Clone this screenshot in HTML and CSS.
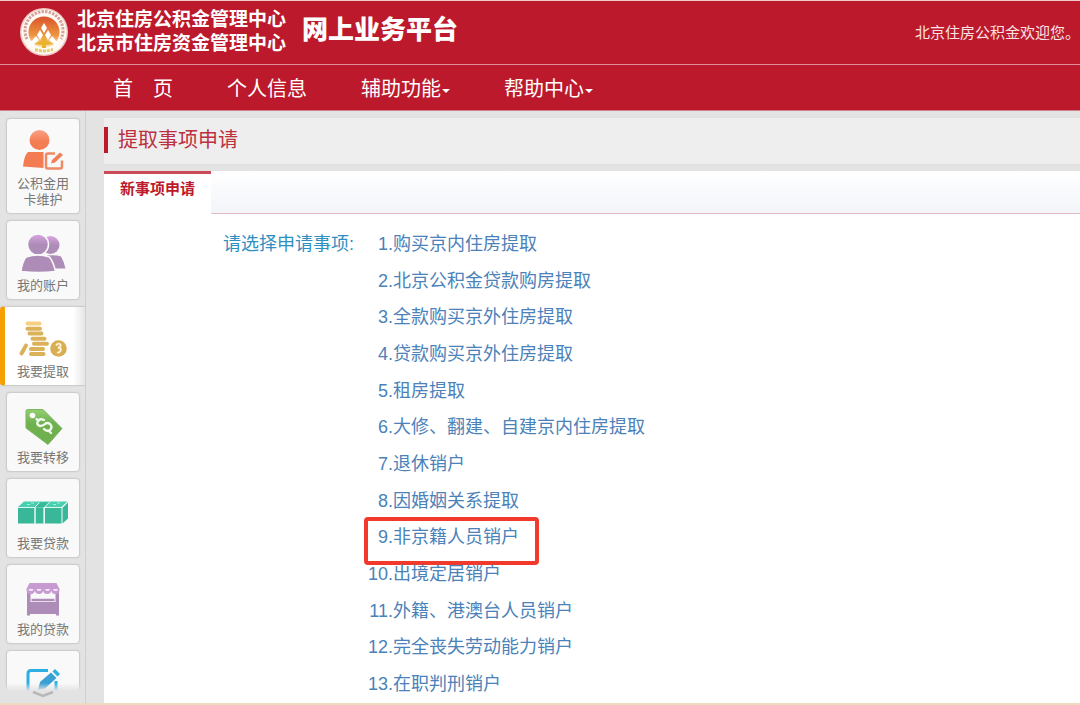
FILE: index.html
```html
<!DOCTYPE html>
<html lang="zh-CN">
<head>
    <meta charset="UTF-8">
    <meta name="viewport" content="width=device-width, initial-scale=1.0">
    <title>网上业务平台</title>
    <link rel="stylesheet" href="styles.css">
</head>
<body>
    <header class="header">
        <div class="banner">
            <svg class="logo" viewBox="0 0 48 48" aria-hidden="true">
                <defs>
                    <linearGradient id="sun" x1="0" y1="0" x2="0" y2="1">
                        <stop offset="0" stop-color="#d9542b"/>
                        <stop offset="0.6" stop-color="#ee9440"/>
                        <stop offset="1" stop-color="#fbe9c0"/>
                    </linearGradient>
                </defs>
                <circle cx="24" cy="24" r="24" fill="#f0c9c2"/>
                <circle cx="24" cy="24" r="22.5" fill="#fffaf3"/>
                <path d="M7 31a19 19 0 1 1 34 0" fill="none" stroke="#d3a09c" stroke-width="3" stroke-dasharray="2.4 1.2"/>
                <circle cx="24" cy="24" r="15.5" fill="url(#sun)"/>
                <path d="M9 31a16 16 0 0 0 30 0l3 5a22 22 0 0 1-36 0z" fill="#fffaf3"/>
                <path d="M24 15l3 5-3 5-3-5zM20 22l3 5-3 5-3-5zM28 22l3 5-3 5-3-5zM16 28l3 4-6 5-4-1zM32 28l-3 4 6 5 4-1z" fill="#fff"/>
                <path d="M24 28l3 5 7 3-8 1v3h-4v-3l-8-1 7-3z" fill="#e9b32e"/>
                <path d="M15 41.500q9 3 18 0" fill="none" stroke="#e3cb6a" stroke-width="3" stroke-dasharray="3 1"/>
            </svg>
            <div class="org">
                <div>北京住房公积金管理中心</div>
                <div>北京市住房资金管理中心</div>
            </div>
            <h1 class="platform">网上业务平台</h1>
            <div class="welcome">北京住房公积金欢迎您。</div>
        </div>
        <nav class="nav">
            <a href="#">首&emsp;页</a>
            <a href="#">个人信息</a>
            <a href="#" class="dropdown">辅助功能</a>
            <a href="#" class="dropdown">帮助中心</a>
        </nav>
    </header>

    <div class="page">
        <aside class="sidebar">
            <a href="#" class="card">
                <svg class="icon" viewBox="0 0 52 48" aria-hidden="true">
                    <defs>
                        <linearGradient id="orange" x1="0" y1="0" x2="0" y2="1">
                            <stop offset="0" stop-color="#fba184"/>
                            <stop offset="0.6" stop-color="#f47c52"/>
                        </linearGradient>
                    </defs>
                    <circle cx="22.500" cy="13" r="10" fill="url(#orange)"/>
                    <path d="M11 25h15.500v16L6 39.500q1-11 5-14.500z" fill="#f47c52"/>
                    <path d="M38 26.500h-7q-2 0-2 2v11q0 2 2 2h12q2 0 2-2v-6" fill="none" stroke="#ee8a66" stroke-width="2.500"/>
                    <path d="M34 36.500l1-3.500 8-7.500 3 2.500-8 7.500z" fill="#f08058"/>
                </svg>
                <span>公积金用<br>卡维护</span>
            </a>
            <a href="#" class="card">
                <svg class="icon" viewBox="0 0 52 48" aria-hidden="true">
                    <defs>
                        <linearGradient id="violet" x1="0" y1="0" x2="0" y2="1">
                            <stop offset="0" stop-color="#d9a6e2"/>
                            <stop offset="0.5" stop-color="#ae8cb8"/>
                        </linearGradient>
                    </defs>
                    <circle cx="33.500" cy="16" r="9" fill="url(#violet)"/>
                    <path d="M30 26.500q9-1 14 1 3 5 4.500 12H36z" fill="#ae8cb8"/>
                    <circle cx="21" cy="15.500" r="10.500" fill="url(#violet)" stroke="#fafafa" stroke-width="1.500"/>
                    <path d="M9 28q12-4 23.500 0 4 5 6 14.500-17 2-34.500 0Q5 33 9 28z" fill="#ae8cb8" stroke="#fafafa" stroke-width="1.500"/>
                </svg>
                <span>我的账户</span>
            </a>
            <a href="#" class="card active">
                <svg class="icon" viewBox="0 0 52 48" aria-hidden="true">
                    <g fill="none" stroke="#dbb25a" stroke-width="4" stroke-linecap="round">
                        <path d="M10.500 8.500h12" stroke="#f6cf80"/>
                        <path d="M10.500 13.700h12.500M12.500 18.600h12M15.500 23.700h12M17 28.800h13M14 34h12M14 39h12.500M4.500 38.500l4.500-8"/>
                    </g>
                    <circle cx="41.500" cy="33.500" r="8.300" fill="#d9ae52"/>
                    <path d="M39 30.500q2-3 4.500-1 1 2-2.500 4M41 32q4 1 2.500 4-2 2-3.500 1.500" fill="none" stroke="#fff2d6" stroke-width="1.800"/>
                </svg>
                <span>我要提取</span>
            </a>
            <a href="#" class="card">
                <svg class="icon" viewBox="0 0 52 48" aria-hidden="true">
                    <defs>
                        <linearGradient id="green" x1="0" y1="0" x2="0" y2="1">
                            <stop offset="0" stop-color="#93d071"/>
                            <stop offset="0.4" stop-color="#6fb04f"/>
                        </linearGradient>
                    </defs>
                    <path d="M10.500 8.500H26L45 27.500 31 43.500 9 27V10q0-1.500 1.500-1.500z" fill="url(#green)" stroke="#7bb35e" stroke-linejoin="round"/>
                    <circle cx="15.500" cy="14.500" r="2.800" fill="#fff"/>
                    <path d="M27 19q-4-2-6 1-2 4 2 5 3 0 5-2t5 0q3 3 0 6-3 2-6-1M19.500 18l2 2M32 30l2 2" fill="none" stroke="#f3faee" stroke-width="2.400" stroke-linecap="round"/>
                </svg>
                <span>我要转移</span>
            </a>
            <a href="#" class="card">
                <svg class="icon" viewBox="0 0 52 48" aria-hidden="true">
                    <path d="M1 20l6-5.500h43.500l-6 5.500z" fill="#48cfb0"/>
                    <path d="M1 20.500h16.500v16H1zM18.500 20.500h8v16h-8zM28 20.500h16.500v16H28z" fill="#38b898"/>
                    <path d="M18.500 20.500l5-5h8l-5 5zM45.500 20.500l5.500-5v16l-5.500 5z" fill="#38b898"/>
                    <path d="M1 20.500h16.500l5-5M18 21v15.500M27.300 36.500v-16l6-6M28 20.500h17l5.500-5" fill="none" stroke="#dff7f0"/>
                    <path d="M10 17.500h3M14 16h3M36 17.500h3M40 16h3" stroke="#a8ecdc" stroke-width="1.200"/>
                </svg>
                <span>我要贷款</span>
            </a>
            <a href="#" class="card">
                <svg class="icon" viewBox="0 0 52 48" aria-hidden="true">
                    <path d="M10 19h3.500v10h25V19H42v23.500h-3V41H13v1.500h-3z" fill="#ae8cb8"/>
                    <path d="M14.500 27h23" stroke="#ae8cb8" stroke-width="2.500"/>
                    <path d="M12.500 10h27l3 6v1a4.100 4.100 0 0 1-8.200 0 4.100 4.100 0 0 1-8.200 0 4.100 4.100 0 0 1-8.200 0 4.100 4.100 0 0 1-8.400 0v-1z" fill="#c79bd2"/>
                    <path d="M11.500 16a2.500 2 0 0 0 5 0M19.500 16a2.500 2 0 0 0 5 0M28 16a2.500 2 0 0 0 5 0M36 16a2.500 2 0 0 0 5 0" fill="#f4e9f6"/>
                </svg>
                <span>我的贷款</span>
            </a>
            <a href="#" class="card" aria-label="申请">
                <svg class="icon" viewBox="0 0 52 48" aria-hidden="true">
                    <path d="M31 11.500H14q-3 0-3 3V40h28V22" fill="none" stroke="#2cb0e4" stroke-width="3"/>
                    <path d="M21 31l2-8L34 13.500l5.500 5.500L28 29.500z" fill="#3aa0d4"/>
                    <path d="M35.500 12.500l2.500-2.500 5 5-2.500 2.500z" fill="#2cb0e4"/>
                </svg>
            </a>
            <button class="more" type="button" aria-label="更多">
                <svg viewBox="0 0 22 8" aria-hidden="true"><path d="M1 2l10 4 10-4" fill="none" stroke="#b8b8b8" stroke-width="2.500"/></svg>
            </button>
        </aside>

        <main class="main">
            <div class="title-bar">
                <h2>提取事项申请</h2>
            </div>
            <div class="tabs">
                <a href="#" class="tab">新事项申请</a>
            </div>
            <section class="content">
                <div class="label">请选择申请事项:</div>
                <ul class="items">
                    <li><a href="#"><span class="num">1.</span>购买京内住房提取</a></li>
                    <li><a href="#"><span class="num">2.</span>北京公积金贷款购房提取</a></li>
                    <li><a href="#"><span class="num">3.</span>全款购买京外住房提取</a></li>
                    <li><a href="#"><span class="num">4.</span>贷款购买京外住房提取</a></li>
                    <li><a href="#"><span class="num">5.</span>租房提取</a></li>
                    <li><a href="#"><span class="num">6.</span>大修、翻建、自建京内住房提取</a></li>
                    <li><a href="#"><span class="num">7.</span>退休销户</a></li>
                    <li><a href="#"><span class="num">8.</span>因婚姻关系提取</a></li>
                    <li><a href="#" class="marked"><span class="num">9.</span>非京籍人员销户</a></li>
                    <li><a href="#"><span class="num">10.</span>出境定居销户</a></li>
                    <li><a href="#"><span class="num">11.</span>外籍、港澳台人员销户</a></li>
                    <li><a href="#"><span class="num">12.</span>完全丧失劳动能力销户</a></li>
                    <li><a href="#"><span class="num">13.</span>在职判刑销户</a></li>
                </ul>
            </section>
        </main>
    </div>
</body>
</html>
```

FILE: styles.css
```css
* {
    box-sizing: border-box;
}
body {
    display: flex;
    flex-direction: column;
    height: 100vh;
    margin: 0;
    font-family: "Liberation Sans", "Noto Sans CJK SC", sans-serif;
    background-color: #e3e3e3;
    border-bottom: 2px solid #ecdcc0;
}
a {
    text-decoration: none;
}

/* 顶部 */
.header {
    background-color: #bc1a2c;
    border-top: 1px solid #f0cccc;
    border-bottom: 1px solid #d0808a;
    color: #fff;
}
.banner {
    display: flex;
    align-items: center;
    height: 64px;
    padding: 0 0 2px 20px;
    border-bottom: 1px solid #dd8f98;
}
.logo {
    width: 48px;
    height: 48px;
    margin-right: 9px;
}
.org {
    font-size: 19px;
    font-weight: bold;
    line-height: 24px;
    margin-right: 16px;
}
.platform {
    margin: 0;
    font-size: 26px;
    font-weight: 900;
    line-height: 24px;
    padding-bottom: 4px;
}
.welcome {
    margin-left: auto;
    font-size: 15px;
    color: #fbe3e5;
}
.nav {
    display: flex;
    gap: 54px;
    padding: 3px 0 0 113px;
}
.nav a {
    color: #fff;
    font-size: 20px;
    line-height: 42px;
}
.dropdown::after {
    content: "";
    display: inline-block;
    border: 4px solid transparent;
    border-top-color: #fff;
    border-bottom: 0;
    margin-left: 1px;
    vertical-align: middle;
}

.page {
    display: flex;
    flex: 1;
    min-height: 0;
}

/* 左侧菜单 */
.sidebar {
    position: relative;
    display: flex;
    flex-direction: column;
    gap: 6px;
    width: 86px;
    padding: 7px 5px 0 6px;
    border-right: 1px solid #cfcfcf;
    overflow: hidden;
}
.card {
    flex: none;
    display: flex;
    flex-direction: column;
    align-items: center;
    min-height: 80px;
    padding: 8px 0 5px;
    background-color: #f9f9f9;
    border: 1px solid #cdcdcd;
    border-radius: 4px;
    box-shadow: 0 0 2px #d0d0d0;
    color: #777;
    font-size: 13px;
    line-height: 16px;
    text-align: center;
}
.icon {
    width: 52px;
    height: 48px;
    margin-bottom: 1px;
}
.active {
    margin: 0 -5px 0 -6px;
    padding-right: 4px;
    background: linear-gradient(to right, #fff 85%, #e6e6e6);
    border-left: 5px solid #f5a000;
    border-right: 0;
    border-radius: 4px 0 0 4px;
}
.more {
    position: absolute;
    left: 0;
    right: 0;
    bottom: 0;
    height: 20px;
    padding: 0;
    border: 0;
    background: linear-gradient(to bottom, rgba(227, 227, 227, 0), #e3e3e3 40%);
    cursor: pointer;
}
.more svg {
    width: 22px;
    height: 8px;
}

/* 主内容 */
.main {
    flex: 1;
    display: flex;
    flex-direction: column;
    padding: 6px 0 0 18px;
}
.title-bar {
    padding: 9px 0 11px;
    background-color: #eee;
    border: 1px solid #e0e0e0;
    border-width: 1px 0;
    margin-bottom: 6px;
}
.title-bar h2 {
    margin: 0;
    padding-left: 10px;
    border-left: 4px solid #bc1a2c;
    color: #bc3040;
    font-size: 20px;
    font-weight: normal;
    line-height: 26px;
}
.tabs {
    display: flex;
    background: linear-gradient(to bottom, #fff, #f2f4f9);
    box-shadow: inset 0 -1px #e6bcc4;
}
.tab {
    padding: 0 16px 11px;
    background-color: #fff;
    border-top: 3px solid #cc4a58;
    color: #bc1a2c;
    font-size: 15px;
    font-weight: bold;
    line-height: 29px;
}
.content {
    flex: 1;
    display: flex;
    gap: 10px;
    padding: 12px 0 1px;
    background-color: #fff;
}
.label {
    width: 250px;
    color: #2f8fc0;
    font-size: 18px;
    line-height: 36px;
    text-align: right;
}
.items {
    display: flex;
    flex-direction: column;
    justify-content: space-between;
    margin: 0;
    padding: 0;
    list-style: none;
}
.items a {
    position: relative;
    display: inline-flex;
    color: #4a82b9;
    font-size: 18px;
    line-height: 36px;
}
.num {
    width: 29px;
    text-align: right;
}
.marked::after {
    content: "";
    position: absolute;
    top: -2px;
    right: -20px;
    bottom: -10px;
    left: 0;
    border: 4px solid #f23a2c;
    border-radius: 4px;
}
```
